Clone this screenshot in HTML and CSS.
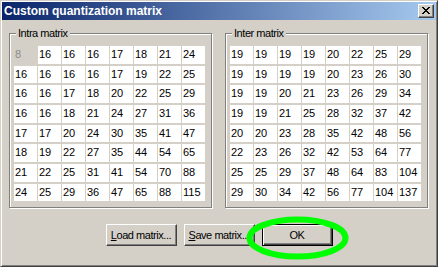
FILE: index.html
```html
<!DOCTYPE html>
<html>
<head>
<meta charset="utf-8">
<link rel="stylesheet" href="styles.css">
</head>
<body>
<div class="window">
  <div class="titlebar">
    <span class="title">Custom quantization matrix</span>
    <div class="close">
      <svg width="8" height="7" viewBox="0 0 8 7" shape-rendering="crispEdges">
        <path fill="#000" d="M0 0h2v1H0zM6 0h2v1H6zM1 1h2v1H1zM5 1h2v1H5zM2 2h4v1H2zM3 3h2v1H3zM2 4h4v1H2zM1 5h2v1H1zM5 5h2v1H5zM0 6h2v1H0zM6 6h2v1H6z"/>
      </svg>
    </div>
  </div>
  <div class="client">
    <div class="groups">
      <div class="group">
        <span class="legend">Intra matrix</span>
        <div class="grid">
          <div class="cell fixed">8</div><div class="cell">16</div><div class="cell">16</div><div class="cell">16</div><div class="cell">17</div><div class="cell">18</div><div class="cell">21</div><div class="cell">24</div>
          <div class="cell">16</div><div class="cell">16</div><div class="cell">16</div><div class="cell">16</div><div class="cell">17</div><div class="cell">19</div><div class="cell">22</div><div class="cell">25</div>
          <div class="cell">16</div><div class="cell">16</div><div class="cell">17</div><div class="cell">18</div><div class="cell">20</div><div class="cell">22</div><div class="cell">25</div><div class="cell">29</div>
          <div class="cell">16</div><div class="cell">16</div><div class="cell">18</div><div class="cell">21</div><div class="cell">24</div><div class="cell">27</div><div class="cell">31</div><div class="cell">36</div>
          <div class="cell">17</div><div class="cell">17</div><div class="cell">20</div><div class="cell">24</div><div class="cell">30</div><div class="cell">35</div><div class="cell">41</div><div class="cell">47</div>
          <div class="cell">18</div><div class="cell">19</div><div class="cell">22</div><div class="cell">27</div><div class="cell">35</div><div class="cell">44</div><div class="cell">54</div><div class="cell">65</div>
          <div class="cell">21</div><div class="cell">22</div><div class="cell">25</div><div class="cell">31</div><div class="cell">41</div><div class="cell">54</div><div class="cell">70</div><div class="cell">88</div>
          <div class="cell">24</div><div class="cell">25</div><div class="cell">29</div><div class="cell">36</div><div class="cell">47</div><div class="cell">65</div><div class="cell">88</div><div class="cell">115</div>
        </div>
      </div>
      <div class="group">
        <span class="legend">Inter matrix</span>
        <div class="grid">
          <div class="cell">19</div><div class="cell">19</div><div class="cell">19</div><div class="cell">19</div><div class="cell">20</div><div class="cell">22</div><div class="cell">25</div><div class="cell">29</div>
          <div class="cell">19</div><div class="cell">19</div><div class="cell">19</div><div class="cell">19</div><div class="cell">20</div><div class="cell">23</div><div class="cell">26</div><div class="cell">30</div>
          <div class="cell">19</div><div class="cell">19</div><div class="cell">20</div><div class="cell">21</div><div class="cell">23</div><div class="cell">26</div><div class="cell">29</div><div class="cell">34</div>
          <div class="cell">19</div><div class="cell">19</div><div class="cell">21</div><div class="cell">25</div><div class="cell">28</div><div class="cell">32</div><div class="cell">37</div><div class="cell">42</div>
          <div class="cell">20</div><div class="cell">20</div><div class="cell">23</div><div class="cell">28</div><div class="cell">35</div><div class="cell">42</div><div class="cell">48</div><div class="cell">56</div>
          <div class="cell">22</div><div class="cell">23</div><div class="cell">26</div><div class="cell">32</div><div class="cell">42</div><div class="cell">53</div><div class="cell">64</div><div class="cell">77</div>
          <div class="cell">25</div><div class="cell">25</div><div class="cell">29</div><div class="cell">37</div><div class="cell">48</div><div class="cell">64</div><div class="cell">83</div><div class="cell">104</div>
          <div class="cell">29</div><div class="cell">30</div><div class="cell">34</div><div class="cell">42</div><div class="cell">56</div><div class="cell">77</div><div class="cell">104</div><div class="cell">137</div>
        </div>
      </div>
    </div>
    <div class="buttons">
      <div class="btn"><u>L</u>oad matrix...</div>
      <div class="btn"><u>S</u>ave matrix...</div>
      <div class="btn default">OK</div>
    </div>
  </div>
  <svg class="highlight" width="438" height="267" viewBox="0 0 438 267">
    <ellipse cx="297.5" cy="238" rx="48" ry="18.5" fill="none" stroke="#00ff00" stroke-width="6"/>
  </svg>
</div>
</body>
</html>
```

FILE: styles.css
```css
html, body {
  margin: 0;
  padding: 0;
  background: #d4d0c8;
}
body {
  width: 438px;
  height: 267px;
  overflow: hidden;
  font-family: "Liberation Sans", Arial, sans-serif;
  font-size: 11px;
  color: #000;
}
.window {
  position: relative;
  box-sizing: border-box;
  width: 438px;
  height: 267px;
  padding: 1px;
  background: #d4d0c8;
  border: 1px solid;
  border-color: #d4d0c8 #404040 #404040 #d4d0c8;
  box-shadow: inset 1px 1px 0 #fff, inset -1px -1px 0 #808080;
}
.titlebar {
  height: 18px;
  display: flex;
  align-items: center;
  justify-content: space-between;
  padding: 0 2px 0 2px;
  background: linear-gradient(to right, #0a246a, #a6caf0);
}
.title {
  color: #fff;
  font-weight: bold;
  font-size: 12px;
  line-height: 18px;
  white-space: nowrap;
}
.close {
  box-sizing: border-box;
  width: 16px;
  height: 14px;
  display: flex;
  align-items: center;
  justify-content: center;
  background: #d4d0c8;
  border: 1px solid;
  border-color: #fff #404040 #404040 #fff;
  box-shadow: inset -1px -1px 0 #808080;
  padding: 0 1px 1px 0;
}
.close svg {
  display: block;
}
.client {
  padding: 13px 0 0 7px;
}
.groups {
  display: flex;
  gap: 13px;
}
.group {
  position: relative;
  box-sizing: border-box;
  width: 203px;
  height: 175px;
  padding: 12px 0 0 4px;
  border: 1px solid #808080;
  box-shadow: 1px 1px 0 #fff, inset 1px 1px 0 #fff;
}
.legend {
  position: absolute;
  top: -7px;
  left: 6px;
  padding: 0 2px;
  line-height: 13px;
  background: #d4d0c8;
  letter-spacing: -0.45px;
  white-space: nowrap;
}
.grid {
  display: grid;
  grid-template-columns: repeat(8, 23px);
  grid-template-rows: repeat(8, 17.67px);
  column-gap: 1px;
  row-gap: 2px;
}
.cell {
  background: #fff;
  padding-left: 1px;
  line-height: 17.67px;
  white-space: nowrap;
  overflow: hidden;
}
.cell.fixed {
  background: transparent;
  color: #8c8c8c;
}
.buttons {
  display: flex;
  justify-content: center;
  gap: 7px;
  margin-top: 16px;
  padding-right: 7px;
}
.btn {
  box-sizing: border-box;
  width: 71px;
  height: 22px;
  display: flex;
  align-items: center;
  justify-content: center;
  border: 1px solid;
  border-color: #fff #404040 #404040 #fff;
  box-shadow: inset -1px -1px 0 #808080;
  letter-spacing: -0.45px;
  white-space: nowrap;
  padding-bottom: 1px;
}
.btn.default {
  border: 1px solid #000;
  box-shadow: inset 1px 1px 0 #fff, inset -1px -1px 0 #404040, inset -2px -2px 0 #808080;
}
.highlight {
  position: absolute;
  left: -1px;
  top: -1px;
  pointer-events: none;
}
```
